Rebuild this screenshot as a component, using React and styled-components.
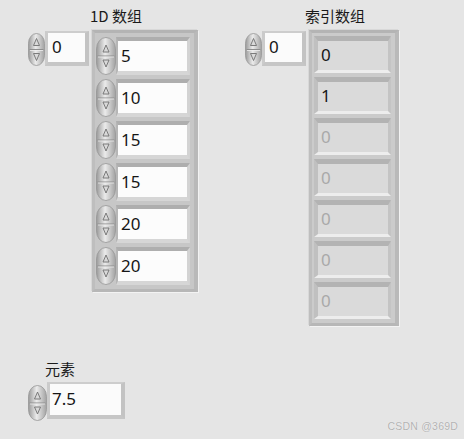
import React, { useId } from 'react';
import styled, { createGlobalStyle } from 'styled-components';

const GlobalStyle = createGlobalStyle`
  html, body {
    margin: 0;
    padding: 0;
    background: #e5e5e5;
  }
`;

const Panel = styled.div`
  position: relative;
  width: 464px;
  height: 439px;
  box-sizing: border-box;
  padding: 6px 0 0 28px;
  background: #e5e5e5;
  font-family: "Noto Sans", "Noto Sans CJK SC", sans-serif;
  color: #161616;
  overflow: hidden;
`;

const TopRow = styled.div`
  display: flex;
  align-items: flex-start;
  gap: 47px;
`;

const Group = styled.div`
  display: flex;
  flex-direction: column;
`;

const Label = styled.div`
  height: 24px;
  line-height: 20px;
  margin-left: ${props => props.$indent}px;
  font-family: "Noto Sans CJK SC", "Noto Sans", sans-serif;
  font-size: 15px;
  color: #1a1a1a;
  white-space: nowrap;
`;

const ArrayRow = styled.div`
  display: flex;
  align-items: flex-start;
  gap: 3px;
`;

const IndexControl = styled.div`
  display: flex;
  align-items: flex-start;
  margin-top: ${props => props.$offset || 0}px;
`;

const IndexBox = styled.div`
  box-sizing: border-box;
  width: ${props => props.$width}px;
  height: 35px;
  margin-top: -2px;
  padding-left: 4px;
  background: #fbfbfb;
  border-top: 2px solid #cdcdcd;
  border-left: 3px solid #cbcbcb;
  border-right: 4px solid #c3c3c3;
  border-bottom: 4px solid #c6c6c6;
  font-size: 17px;
  line-height: 28px;
  color: #161616;
`;

const ArrayFrame = styled.div`
  box-sizing: border-box;
  width: ${props => props.$width}px;
  padding: ${props => props.$padTop}px 0 0 ${props => props.$padLeft}px;
  background: ${props => props.$bg};
  border-top: 3px solid #b4b4b4;
  border-left: 3px solid #bebebe;
  border-right: 4px solid #b9b9b9;
  border-bottom: 3px solid #b7b7b7;
  box-shadow: 1px 1px 0 #f3f3f3, -1px -1px 0 #d8d8d8;
`;

const Cell = styled.div`
  display: flex;
  align-items: flex-start;
  height: ${props => props.$pitch}px;
`;

const NumBox = styled.div`
  box-sizing: border-box;
  width: 74px;
  height: 38px;
  padding-left: 3px;
  background: #fcfcfc;
  border-top: 4px solid #aeaeae;
  border-left: 2px solid #b6b6b6;
  border-right: 3px solid #d3d3d3;
  border-bottom: 4px solid #d6d6d6;
  font-size: 17px;
  line-height: 29px;
  color: #161616;
`;

const ShowBox = styled.div`
  box-sizing: border-box;
  width: 77px;
  height: 37px;
  padding-left: 3px;
  background: #dadada;
  border-top: 5px solid #b3b3b3;
  border-left: 4px solid #c0c0c0;
  border-right: 3px solid #c4c4c4;
  border-bottom: 3px solid #ededed;
  font-size: 17px;
  line-height: 28px;
  color: ${props => (props.$empty ? '#a9a9a9' : '#161616')};
`;

const ElementGroup = styled.div`
  display: flex;
  flex-direction: column;
  margin-top: 33px;
`;

const ElementBox = styled(IndexBox)`
  margin-top: -3px;
  height: 37px;
  padding-left: 2px;
  line-height: 30px;
`;

const Watermark = styled.div`
  position: absolute;
  right: 6px;
  bottom: 7px;
  font-family: "Liberation Sans", Arial, sans-serif;
  font-size: 10.5px;
  letter-spacing: 0.2px;
  color: #b2b2b2;
  text-shadow: 0 0 1px #ffffff;
`;

const Spinner = ({ w = 18, h = 34 }) => {
  const id = 'g' + useId().replace(/[^a-zA-Z0-9]/g, '');
  const cx = w / 2;
  const mid = h / 2;
  const rx = (w - 1) / 2;
  const ry = h * 0.3;
  return (
    <svg width={w} height={h} viewBox={`0 0 ${w} ${h}`} style={{ display: 'block', flex: 'none' }}>
      <defs>
        <linearGradient id={id} x1="0" y1="0" x2="1" y2="0">
          <stop offset="0" stopColor="#9a9a9a" />
          <stop offset="0.45" stopColor="#ebebeb" />
          <stop offset="1" stopColor="#a2a2a2" />
        </linearGradient>
      </defs>
      <rect x="0.5" y="0.5" width={w - 1} height={h - 1} rx={rx} ry={ry} fill={`url(#${id})`} stroke="#959595" strokeWidth="0.8" />
      <line x1="1.5" y1={mid} x2={w - 1.5} y2={mid} stroke="#8e8e8e" strokeWidth="1" />
      <line x1="2" y1={mid + 1} x2={w - 2} y2={mid + 1} stroke="#efefef" strokeWidth="0.8" />
      <polygon
        points={`${cx},${mid - 11} ${cx - 3},${mid - 4} ${cx + 3},${mid - 4}`}
        fill="#d9d9d9"
        stroke="#6f6f6f"
        strokeWidth="0.9"
        strokeLinejoin="round"
      />
      <polygon
        points={`${cx},${mid + 11} ${cx - 3},${mid + 4} ${cx + 3},${mid + 4}`}
        fill="#d9d9d9"
        stroke="#6f6f6f"
        strokeWidth="0.9"
        strokeLinejoin="round"
      />
    </svg>
  );
};

const values = [5, 10, 15, 15, 20, 20];
const indexed = [
  { v: 0, empty: false },
  { v: 1, empty: false },
  { v: 0, empty: true },
  { v: 0, empty: true },
  { v: 0, empty: true },
  { v: 0, empty: true },
  { v: 0, empty: true },
];

const App = () => (
  <Panel>
    <GlobalStyle />
    <TopRow>
      <Group>
        <Label $indent={62}>1D 数组</Label>
        <ArrayRow>
          <IndexControl $offset={3}>
            <Spinner w={17} h={33} />
            <IndexBox $width={44}>0</IndexBox>
          </IndexControl>
          <ArrayFrame $width={106} $padTop={4} $padLeft={1} $bg="#c7c7c7">
            {values.map((v, i) => (
              <Cell key={i} $pitch={42}>
                <Spinner w={20} h={38} />
                <NumBox>{v}</NumBox>
              </Cell>
            ))}
          </ArrayFrame>
        </ArrayRow>
      </Group>
      <Group>
        <Label $indent={60}>索引数组</Label>
        <ArrayRow>
          <IndexControl $offset={3}>
            <Spinner w={17} h={33} />
            <IndexBox $width={44}>0</IndexBox>
          </IndexControl>
          <ArrayFrame $width={90} $padTop={3} $padLeft={2} $bg="#cbcbcb">
            {indexed.map((item, i) => (
              <Cell key={i} $pitch={41}>
                <ShowBox $empty={item.empty}>{item.v}</ShowBox>
              </Cell>
            ))}
          </ArrayFrame>
        </ArrayRow>
      </Group>
    </TopRow>
    <ElementGroup>
      <Label $indent={17}>元素</Label>
      <IndexControl $offset={2}>
        <Spinner w={19} h={36} />
        <ElementBox $width={78}>7.5</ElementBox>
      </IndexControl>
    </ElementGroup>
    <Watermark>CSDN @369D</Watermark>
  </Panel>
);

export default App;
